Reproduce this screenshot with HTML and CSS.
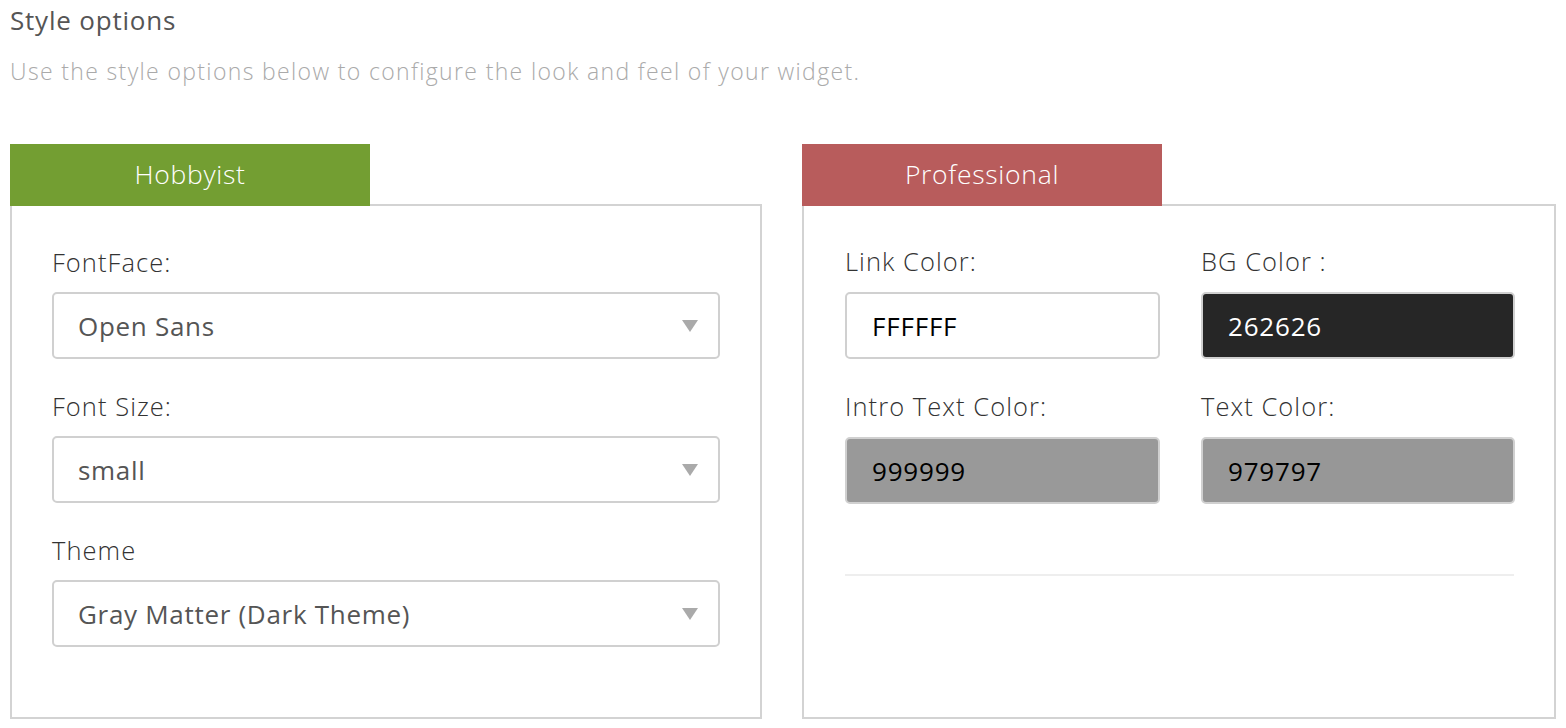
FILE: index.html
```html
<!DOCTYPE html>
<html>
<head>
<meta charset="utf-8">
<link rel="stylesheet" href="styles.css">
</head>
<body>
<div class="page">
  <h2 class="title">Style options</h2>
  <p class="intro">Use the style options below to configure the look and feel of your widget.</p>
  <div class="cols">
    <section class="plan">
      <div class="tab tab-green">Hobbyist</div>
      <div class="panel panel-left">
        <div class="field">
          <label class="lbl">FontFace:</label>
          <div class="select"><span>Open Sans</span><i class="caret"></i></div>
        </div>
        <div class="field">
          <label class="lbl">Font Size:</label>
          <div class="select"><span>small</span><i class="caret"></i></div>
        </div>
        <div class="field">
          <label class="lbl">Theme</label>
          <div class="select"><span>Gray Matter (Dark Theme)</span><i class="caret"></i></div>
        </div>
      </div>
    </section>
    <section class="plan">
      <div class="tab tab-red">Professional</div>
      <div class="panel panel-right">
        <div class="grid">
          <div class="field">
            <label class="lbl">Link Color:</label>
            <div class="color c-white">FFFFFF</div>
          </div>
          <div class="field">
            <label class="lbl">BG Color :</label>
            <div class="color c-dark">262626</div>
          </div>
          <div class="field">
            <label class="lbl">Intro Text Color:</label>
            <div class="color c-gray1">999999</div>
          </div>
          <div class="field">
            <label class="lbl">Text Color:</label>
            <div class="color c-gray2">979797</div>
          </div>
        </div>
        <hr class="sep">
      </div>
    </section>
  </div>
</div>
</body>
</html>
```
FILE: styles.css
```css
* { box-sizing: border-box; }
html, body { margin: 0; padding: 0; background: #fff; }
body { font-family: "Open Sans", "Noto Sans", sans-serif; }
.page { padding: 0 10px; width: 1566px; }
.title {
  margin: 0;
  padding-top: 2px;
  font-size: 26px;
  line-height: 36px;
  font-weight: 400;
  letter-spacing: 0.8px;
  color: #555;
}
.intro {
  margin: 18px 0 0;
  font-size: 23px;
  line-height: 30px;
  font-weight: 300;
  letter-spacing: 1.35px;
  color: #aaa;
}
.cols {
  margin-top: 58px;
  display: grid;
  grid-template-columns: 752px 754px;
  column-gap: 40px;
}
.plan { display: flex; flex-direction: column; }
.tab {
  position: relative;
  z-index: 1;
  width: 360px;
  height: 62px;
  display: flex;
  align-items: center;
  justify-content: center;
  padding-bottom: 2px;
  color: #fff;
  font-size: 26.5px;
  font-weight: 300;
  letter-spacing: 0.7px;
}
.tab-green { background: #739e32; }
.tab-red { background: #b85c5c; }
.panel {
  margin-top: -2px;
  height: 515px;
  border: 2px solid #d3d3d3;
}
.panel-left { padding: 39px 40px 0 40px; }
.panel-right { padding: 38px 40px 0 41px; }
.field { display: flex; flex-direction: column; }
.panel-left .field + .field { margin-top: 30px; }
.lbl {
  font-size: 25.5px;
  line-height: 34px;
  font-weight: 300;
  letter-spacing: 1.05px;
  color: #333;
  margin-bottom: 13px;
}
.panel-right .lbl { margin-bottom: 14px; }
.select {
  height: 67px;
  border: 2px solid #d0d0d0;
  border-radius: 5px;
  display: flex;
  align-items: center;
  justify-content: space-between;
  padding: 0 20px 0 24px;
  font-size: 26px;
  letter-spacing: 0.7px;
  color: #555;
}
.caret {
  width: 0;
  height: 0;
  border-left: 8px solid transparent;
  border-right: 8px solid transparent;
  border-top: 12px solid #aaa;
}
.grid {
  display: grid;
  grid-template-columns: 315px 314px;
  column-gap: 41px;
  row-gap: 30px;
}
.color {
  height: 67px;
  border: 2px solid #d0d0d0;
  border-radius: 5px;
  display: flex;
  align-items: center;
  padding: 0 25px;
  font-size: 26px;
  letter-spacing: 0.8px;
  color: #000;
}
.c-white { background: #fff; }
.c-dark { background: #262626; color: #fff; }
.c-gray1 { background: #999999; }
.c-gray2 { background: #979797; }
.sep {
  margin: 70px 0 0;
  border: 0;
  border-top: 2px solid #eee;
}
```
